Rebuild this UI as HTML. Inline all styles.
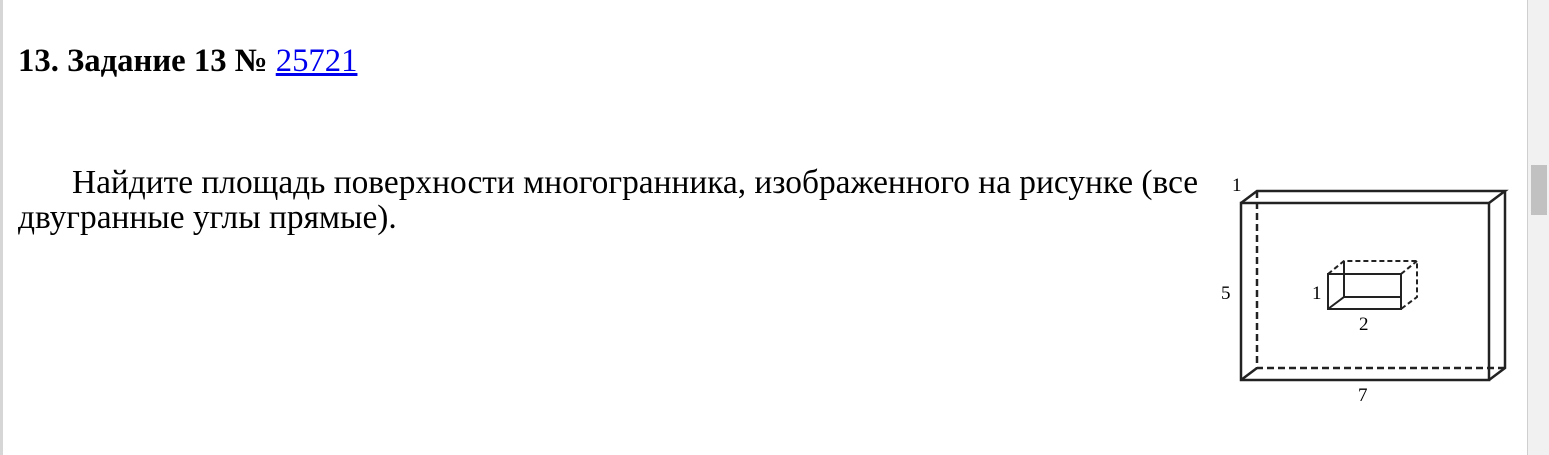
<!DOCTYPE html>
<html><head><meta charset="utf-8"><style>
body{margin:0;width:1549px;height:455px;background:#fff;position:relative;overflow:hidden;font-family:"Liberation Serif","Noto Serif CJK SC",serif;color:#000}
.lb{position:absolute;left:0;top:0;width:3px;height:455px;background:#d6d6d6}
.sb{position:absolute;left:1527px;top:0;width:22px;height:455px;background:#f1f1f1;border-left:1px solid #cfcfcf}
.th{position:absolute;left:3px;top:165px;width:16px;height:50px;background:#c1c1c1}
h1{position:absolute;left:18px;top:42px;margin:0;font-size:32.7px;line-height:38px;font-weight:bold;white-space:nowrap}
h1 a{color:#0000ee;font-weight:normal;text-decoration:underline}
p{position:absolute;left:18px;top:165px;margin:0;width:1190px;font-size:33.4px;line-height:35px;text-indent:54px}
svg{position:absolute;left:0;top:0}
</style></head><body>
<div class="lb"></div>
<h1>13. Задание 13 № <a>25721 </a></h1>
<p>Найдите площадь поверхности многогранника, изображенного на рисунке (все двугранные углы прямые).</p>
<svg width="1549" height="455" font-family="Liberation Serif" font-size="19">
<g stroke="#222" stroke-width="2.5" fill="none">
<rect x="1241" y="203" width="248" height="177"/>
<path d="M1241 203L1257 191H1505L1489 203M1505 191V368L1489 380M1241 380L1257 368"/>
<path d="M1257 191V368H1505" stroke-dasharray="7 4"/>
<g stroke-width="2">
<rect x="1328" y="274" width="73" height="35"/>
<path d="M1344 261V297M1328 309L1344 297H1401"/>
<path d="M1328 274L1344 261H1417V297L1401 309M1401 274L1417 261" stroke-dasharray="5 3"/>
</g></g>
<text x="1232" y="191">1</text><text x="1221" y="299">5</text><text x="1358" y="401">7</text>
<text x="1312" y="299">1</text><text x="1359" y="330">2</text>
</svg>
<div class="sb"><div class="th"></div></div>
</body></html>
